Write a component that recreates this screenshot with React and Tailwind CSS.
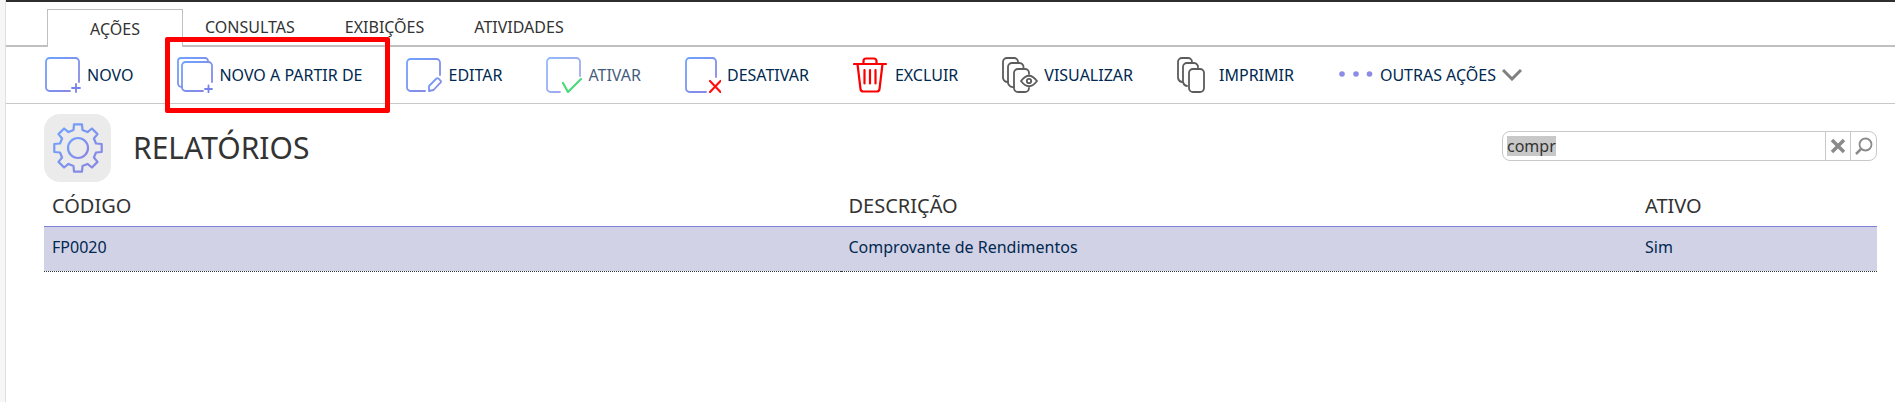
import React, { useState } from 'react';

const tabs = ['AÇÕES', 'CONSULTAS', 'EXIBIÇÕES', 'ATIVIDADES'];

function Icon({ children, className = 'text-[#7482ea]' }) {
  return (
    <svg
      viewBox="0 0 36 36"
      className={`size-9 shrink-0 ${className}`}
      fill="none"
      stroke="currentColor"
      strokeWidth="1.8"
      strokeLinecap="round"
      strokeLinejoin="round"
      aria-hidden="true"
    >
      {children}
    </svg>
  );
}

const icons = {
  novo: (
    <Icon>
      <g stroke="url(#blue)">
        <path d="M25 34H4.500a3.500 3.500 0 0 1-3.500-3.500V4.500A3.500 3.500 0 0 1 4.500 1h26A3.500 3.500 0 0 1 34 4.500V25" />
      </g>
      <path d="M27 31h8M31 27v8" />
    </Icon>
  ),
  copia: (
    <Icon>
      <g stroke="url(#blue)">
        <path d="M5 30a4 4 0 0 1-4-3.500V4a3 3 0 0 1 3-3h24a3 3 0 0 1 3 3.500" />
        <path d="M26 34H8.500A3.500 3.500 0 0 1 5 30.500v-22A3.500 3.500 0 0 1 8.500 5h23A3.500 3.500 0 0 1 35 8.500V25" />
      </g>
      <path d="M28 32h7M31.500 28.500v7" />
    </Icon>
  ),
  editar: (
    <Icon>
      <g stroke="url(#blue)">
        <path d="M19 34H4.500a3.500 3.500 0 0 1-3.500-3.500V5.500A3.500 3.500 0 0 1 4.500 2h26A3.500 3.500 0 0 1 34 5.500V18" />
        <path d="M23 34v-5l7.500-7.500q1-.8 2 .2l2 2q.9 1 0 2L27.500 33z" />
      </g>
    </Icon>
  ),
  ativar: (
    <Icon>
      <g stroke="url(#blue)">
        <path d="M14 35H4.500a3.500 3.500 0 0 1-3.500-3.500v-27A3.500 3.500 0 0 1 4.500 1h26A3.500 3.500 0 0 1 34 4.500V19" />
      </g>
      <path d="M17 26l5 9 13-13" stroke="#10d050" strokeWidth="2.200" />
    </Icon>
  ),
  desativar: (
    <Icon>
      <g stroke="url(#blue)">
        <path d="M21 35H4.500a3.500 3.500 0 0 1-3.500-3.500v-27A3.500 3.500 0 0 1 4.500 1h23A3.500 3.500 0 0 1 31 4.500V20" />
      </g>
      <path d="M25 24l10.500 11M35.500 24l-10.500 11" stroke="#ff1010" strokeWidth="2.200" />
    </Icon>
  ),
  excluir: (
    <Icon className="text-[#fa0000]">
      <g strokeWidth="2.200">
        <path d="M1 7h32M10.500 7V4a2.500 2.500 0 0 1 2.500-2.500h8A2.500 2.500 0 0 1 23.500 4v3M4.500 7l3 25q.3 2.500 2.800 2.500h13.400q2.500 0 2.800-2.500L29.500 7" />
        <path d="M11.500 13v13.500M17 13v13.500M22.500 13v13.500" />
      </g>
    </Icon>
  ),
  visualizar: (
    <Icon className="text-[#5c5c5c]">
      <path d="M6 25a5 5 0 0 1-5-4V5a4 4 0 0 1 4-4h7a4 4 0 0 1 4 4" />
      <path d="M12 30a5 5 0 0 1-6-4V10a4 4 0 0 1 4-4h7.500a4 4 0 0 1 4 4.500" />
      <path d="M27 17v-1a4 4 0 0 0-4-4H16a4 4 0 0 0-4 4V31a4 4 0 0 0 4 4h7a4 4 0 0 0 4-4" />
      <path d="M19 24q8-10.500 16 0q-8 10.500-16 0z" />
      <circle cx="27" cy="24" r="2.200" />
    </Icon>
  ),
  imprimir: (
    <Icon className="text-[#5c5c5c]">
      <path d="M5 25a5 5 0 0 1-4-4V5a4 4 0 0 1 4-4h6a4 4 0 0 1 4 4" />
      <path d="M10 29a5 5 0 0 1-4-4V10a4 4 0 0 1 4-4h7a4 4 0 0 1 4 4.500" />
      <rect x="12" y="12" width="15" height="23" rx="4" />
    </Icon>
  ),
  outras: (
    <Icon className="text-[#8c8ce8]">
      <g fill="currentColor" stroke="none">
        <circle cx="4" cy="17" r="2.800" />
        <circle cx="18" cy="17" r="2.800" />
        <circle cx="31.500" cy="17" r="2.800" />
      </g>
    </Icon>
  ),
};

const actions = [
  { id: 'novo', label: 'NOVO' },
  { id: 'copia', label: 'NOVO A PARTIR DE', highlight: true },
  { id: 'editar', label: 'EDITAR' },
  { id: 'ativar', label: 'ATIVAR', disabled: true },
  { id: 'desativar', label: 'DESATIVAR' },
  { id: 'excluir', label: 'EXCLUIR' },
  { id: 'visualizar', label: 'VISUALIZAR' },
  { id: 'imprimir', label: 'IMPRIMIR' },
  { id: 'outras', label: 'OUTRAS AÇÕES', menu: true },
];

const rows = [{ codigo: 'FP0020', descricao: 'Comprovante de Rendimentos', ativo: 'Sim' }];

// Eight teeth, each one is [radius, angle offset]
const tooth = [
  [18.5, -14],
  [24, -9.5],
  [24, 9.5],
  [18.5, 14],
];
const gearPoints = Array.from({ length: 8 }, (_, i) =>
  tooth.map(([r, offset]) => {
    const a = ((i * 45 + offset) * Math.PI) / 180;
    return `${(25 + r * Math.cos(a)).toFixed(1)},${(25 + r * Math.sin(a)).toFixed(1)}`;
  }).join(' ')
).join(' ');

function Tabs() {
  const [active, setActive] = useState('AÇÕES');

  return (
    <nav className="flex h-[45px] items-end border-b-2 border-[#c0c0c0] pl-[41px]">
      {tabs.map((tab) => (
        <button
          key={tab}
          onClick={() => setActive(tab)}
          className={
            active === tab
              ? '-mb-0.5 mr-[22px] h-[38px] w-[136px] border border-b-0 border-[#c0c0c0] bg-white'
              : 'mr-[50px] h-9'
          }
        >
          {tab}
        </button>
      ))}
    </nav>
  );
}

function Toolbar() {
  return (
    <div className="flex h-[57px] items-center gap-11 border-b border-[#c8c8c8] pl-[39px]">
      {actions.map((action) => (
        <button
          key={action.id}
          disabled={action.disabled}
          className="relative flex items-center gap-1.5 whitespace-nowrap text-[#002850] disabled:opacity-75"
        >
          {icons[action.id]}
          {action.label}
          {action.menu && (
            <svg viewBox="0 0 20 12" className="h-3 w-5" fill="none" stroke="#808080" strokeWidth="3" aria-hidden="true">
              <path d="M1 1l9 9 9-9" />
            </svg>
          )}
          {action.highlight && (
            <span className="pointer-events-none absolute -top-5 -right-7 -bottom-5 -left-3 rounded-xs border-5 border-[#ff0000]" />
          )}
        </button>
      ))}
    </div>
  );
}

function GearIcon() {
  return (
    <div className="flex h-[68px] w-[67px] items-center justify-center rounded-2xl bg-[#ebebeb]">
      <svg viewBox="0 0 50 50" className="size-[50px]" fill="none" stroke="url(#blue)" strokeWidth="2.200" strokeLinejoin="round" aria-hidden="true">
        <circle cx="25" cy="25" r="10" />
        <polygon points={gearPoints} />
      </svg>
    </div>
  );
}

function SearchBox() {
  const [query, setQuery] = useState('compr');

  return (
    <div className="mb-1 flex h-[30px] w-[375px] items-stretch overflow-hidden rounded-lg border border-[#c8c8c8]">
      <div className="grid min-w-0 flex-1 items-center pl-1">
        <input
          aria-label="Pesquisar"
          value={query}
          onChange={(e) => setQuery(e.target.value)}
          className="field-sizing-content h-5 min-w-0 justify-self-start bg-[#c8c8c8] text-[#333] outline-none"
        />
      </div>
      <button aria-label="Limpar" onClick={() => setQuery('')} className="flex w-[25px] items-center justify-center border-l border-[#c8c8c8]">
        <svg viewBox="0 0 16 16" className="size-4" stroke="#8a8a8a" strokeWidth="3.500" aria-hidden="true">
          <path d="M2 2l12 12M14 2L2 14" />
        </svg>
      </button>
      <button aria-label="Buscar" className="flex w-[26px] items-center justify-center border-l border-[#c8c8c8]">
        <svg viewBox="0 0 18 18" className="size-[18px]" fill="none" stroke="#8a8a8a" strokeWidth="1.800" aria-hidden="true">
          <circle cx="10.500" cy="7.500" r="6" />
          <path d="M6 12l-5 5" strokeWidth="2.500" />
        </svg>
      </button>
    </div>
  );
}

export default function App() {
  return (
    <div className="flex min-h-screen bg-[#f6f6f6] font-['Noto_Sans',sans-serif] text-base text-[#333]">
      {/* Shared icon gradient */}
      <svg className="absolute size-0" aria-hidden="true">
        <defs>
          <linearGradient id="blue" x1="0" y1="0" x2="1" y2="1">
            <stop offset="0" stopColor="#6ea3ff" />
            <stop offset="1" stopColor="#8c83e0" />
          </linearGradient>
        </defs>
      </svg>

      <div className="ml-[5px] min-w-0 flex-1 border-l border-[#e0e0e0] bg-white">
        <div className="h-0.5 bg-[#302d2d]" />
        <Tabs />
        <Toolbar />

        <main className="pr-[18px] pl-[38px]">
          <header className="flex items-center gap-[22px] pt-2.5">
            <GearIcon />
            <h1 className="flex-1 text-3xl">RELATÓRIOS</h1>
            <SearchBox />
          </header>

          <table className="w-full table-fixed text-left">
            <thead>
              <tr className="h-11 border-b border-[#8080d8] text-xl">
                <th className="px-2 pt-1 font-normal">CÓDIGO</th>
                <th className="px-2 pt-1 font-normal">DESCRIÇÃO</th>
                <th className="w-60 px-2 pt-1 font-normal">ATIVO</th>
              </tr>
            </thead>
            <tbody>
              {rows.map((row) => (
                <tr key={row.codigo} className="h-[45px] border-b border-dotted border-[#333] bg-[#d2d2e6] text-[#002850]">
                  <td className="px-2 pb-1">{row.codigo}</td>
                  <td className="px-2 pb-1">{row.descricao}</td>
                  <td className="px-2 pb-1">{row.ativo}</td>
                </tr>
              ))}
            </tbody>
          </table>
        </main>
      </div>
    </div>
  );
}
